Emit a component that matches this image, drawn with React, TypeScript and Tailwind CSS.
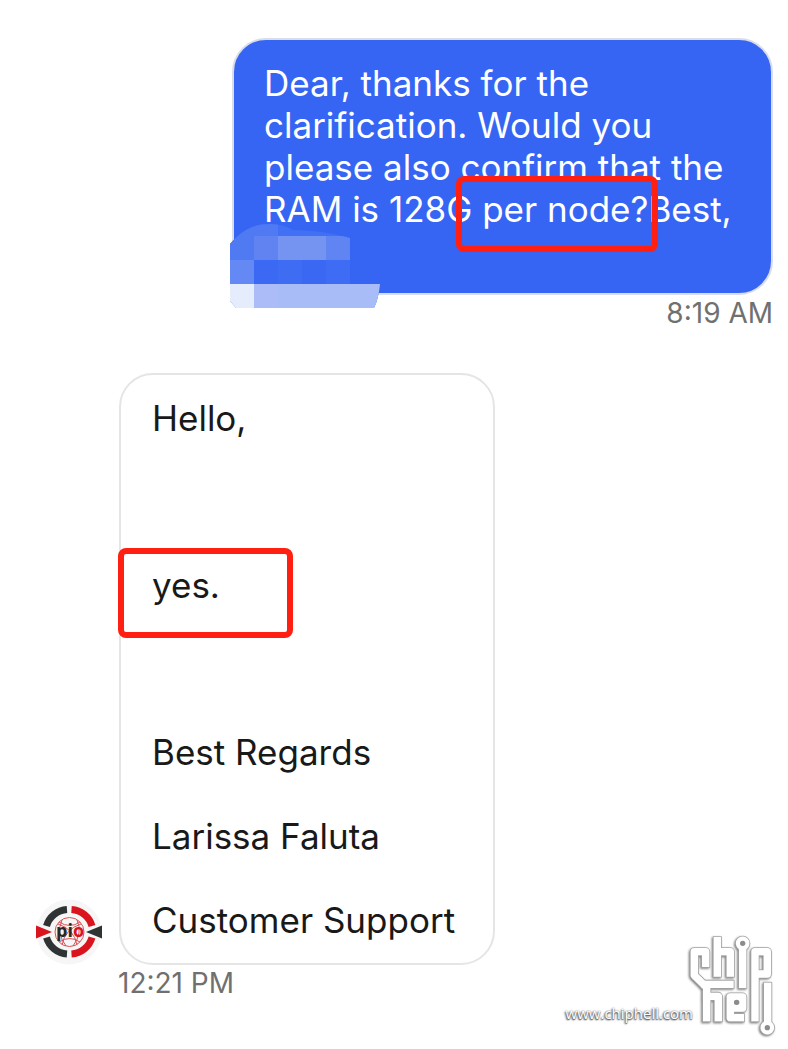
import React from "react";

function Marker({ className }: { className: string }) {
  return (
    <span
      aria-hidden="true"
      className={`pointer-events-none absolute rounded-lg border-6 border-[#ff2012] ${className}`}
    />
  );
}

function Redaction() {
  return (
    <svg
      aria-hidden="true"
      viewBox="0 0 150 84"
      className="absolute -bottom-[15px] -left-1 h-[84px] w-[150px]"
    >
      <defs>
        <clipPath id="brush">
          <path d="M0 20C12 6 24 0 40 0C50 0 58 3 63 6C85 6 105 10 120 14V60H150C149 70 147 78 144 84H6L0 77Z" />
        </clipPath>
      </defs>
      <g clipPath="url(#brush)" shapeRendering="crispEdges">
        <rect width="150" height="84" fill="#4270f4" />
        <rect width="24" height="36" fill="#4f7af1" />
        <rect x="24" width="24" height="12" fill="#4f7af3" />
        <rect x="24" y="12" width="24" height="24" fill="#6183f2" />
        <rect x="48" y="12" width="48" height="24" fill="#7593f0" />
        <rect x="96" y="12" width="24" height="24" fill="#6084f1" />
        <rect y="36" width="24" height="24" fill="#6489f4" />
        <rect x="24" y="36" width="24" height="24" fill="#3b69f3" />
        <rect x="48" y="36" width="24" height="24" fill="#3e6cf3" />
        <rect x="72" y="36" width="24" height="24" fill="#3a68f3" />
        <rect x="96" y="36" width="24" height="24" fill="#3f6cf4" />
        <rect y="60" width="24" height="24" fill="#e5ecfb" />
        <rect x="24" y="60" width="24" height="24" fill="#abbcf9" />
        <rect x="48" y="60" width="102" height="24" fill="#a8bcf7" />
      </g>
    </svg>
  );
}

function Avatar() {
  return (
    <svg role="img" aria-label="pio" viewBox="0 0 66 66" className="size-[66px] shrink-0">
      <circle cx="33" cy="33" r="32.5" fill="#f6f6f6" />
      <g fill="none" strokeWidth="7">
        <path d="M10.500 27A23 23 0 0 1 31 10.500" stroke="#303334" />
        <path d="M35.500 10.500A23 23 0 0 1 56 27" stroke="#d9141f" />
        <path d="M10.500 38.500A23 23 0 0 0 31 55" stroke="#303334" />
        <path d="M35.500 55A23 23 0 0 0 56 38.500" stroke="#d9141f" />
      </g>
      <path d="M0 26.500L16 33L0 39.500Z" fill="#d9141f" />
      <path d="M66 26.500L50 33L66 39.500Z" fill="#303334" />
      <g fill="none" stroke="#dc5058" strokeWidth="1">
        <circle cx="33.500" cy="33" r="14.500" />
        <path d="M23 23Q34 30 44 23M23 43Q34 36 44 43M26 21Q20 34 30 47M41 21Q47 34 37 47M22 25Q38 30 41 46M45 25Q29 30 26 46" />
      </g>
      <text
        x="20"
        y="38"
        fontSize="18"
        fontWeight="700"
        className="font-['Open_Sans',sans-serif]"
        fill="#26292a"
      >
        pi<tspan fill="#d9141f">o</tspan>
      </text>
    </svg>
  );
}

function ChiphellLogo() {
  return (
    <svg
      role="img"
      aria-label="chiphell"
      viewBox="405 15 285 330"
      className="h-[110px] w-[95px] drop-shadow-[-1px_1px_1px_#777]"
    >
      {[
        { color: "#a8a8a8", extra: 5 },
        { color: "#ffffff", extra: 0 },
      ].map(({ color, extra }) => (
        <g
          key={color}
          fill="none"
          stroke={color}
          strokeWidth={22 + extra}
          strokeLinecap="square"
          strokeLinejoin="round"
        >
          <path d="M467 112V77H433V148L470 184V275" />
          <path d="M466 175H540" />
          <path d="M470 211H505V275" />
          <path d="M502 44V141M502 77H541V141" />
          <path d="M578 60V175" />
          <path d="M615 275V77H652V144H620" />
          <path d="M571 275H541V213H578V246H546" />
          <path d="M653 181V300" />
          <circle cx="578" cy="52" r="13" strokeWidth={15 + extra} />
          <circle cx="652" cy="305" r="13" strokeWidth={15 + extra} />
        </g>
      ))}
      <circle cx="578" cy="52" r="8" fill="#8c8c8c" />
      <circle cx="652" cy="305" r="8" fill="#8c8c8c" />
      <circle cx="560" cy="229" r="8" fill="#8c8c8c" />
    </svg>
  );
}

export default function App() {
  return (
    <main className="relative flex min-h-screen flex-col bg-white pt-[38px] pr-[15px] pl-9 font-['Inter','Liberation_Sans',sans-serif] text-[35px] leading-[42px] text-[#191919]">
      <section className="flex flex-col items-end">
        <div className="relative w-[541px] max-w-full rounded-[34px] border-2 border-[#d9dcea] bg-[#3665f3] px-[30px] pt-[22px] pb-[63px] text-white">
          <p>
            Dear, thanks for the
            <br />
            clarification. Would you
            <br />
            please also confirm that the
            <br />
            RAM is 128G{" "}
            <span className="relative">
              per node?
              <Marker className="-top-3 -right-[10px] h-[76px] w-[202px]" />
            </span>
            Best,
          </p>
          <Redaction />
        </div>
        <time className="text-[28px] leading-9 text-[#707070]">8:19 AM</time>
      </section>

      <section className="mt-[42px] flex items-end gap-[17px]">
        <Avatar />
        <div className="relative w-[376px] rounded-[34px] border-2 border-[#e5e5e5] bg-white px-[31px] pt-[22px] pb-[22px]">
          <p>Hello,</p>
          <p className="mt-[125px]">yes.</p>
          <Marker className="top-[173px] -left-[3px] h-[90px] w-[175px]" />
          <p className="mt-[125px]">Best Regards</p>
          <p className="mt-[42px]">Larissa Faluta</p>
          <p className="mt-[42px]">Customer Support</p>
        </div>
      </section>
      <time className="ml-[82px] text-[28px] leading-9 text-[#707070]">12:21 PM</time>

      <footer className="absolute right-2 bottom-2 flex items-end">
        <a
          href="http://www.chiphell.com"
          className="-mr-2 mb-4 font-['Open_Sans',sans-serif] text-[15px] leading-6 font-medium text-white [text-shadow:0_0_2px_#666,-1px_1px_2px_#555,0_1px_1px_#777]"
        >
          www.chiphell.com
        </a>
        <ChiphellLogo />
      </footer>
    </main>
  );
}
